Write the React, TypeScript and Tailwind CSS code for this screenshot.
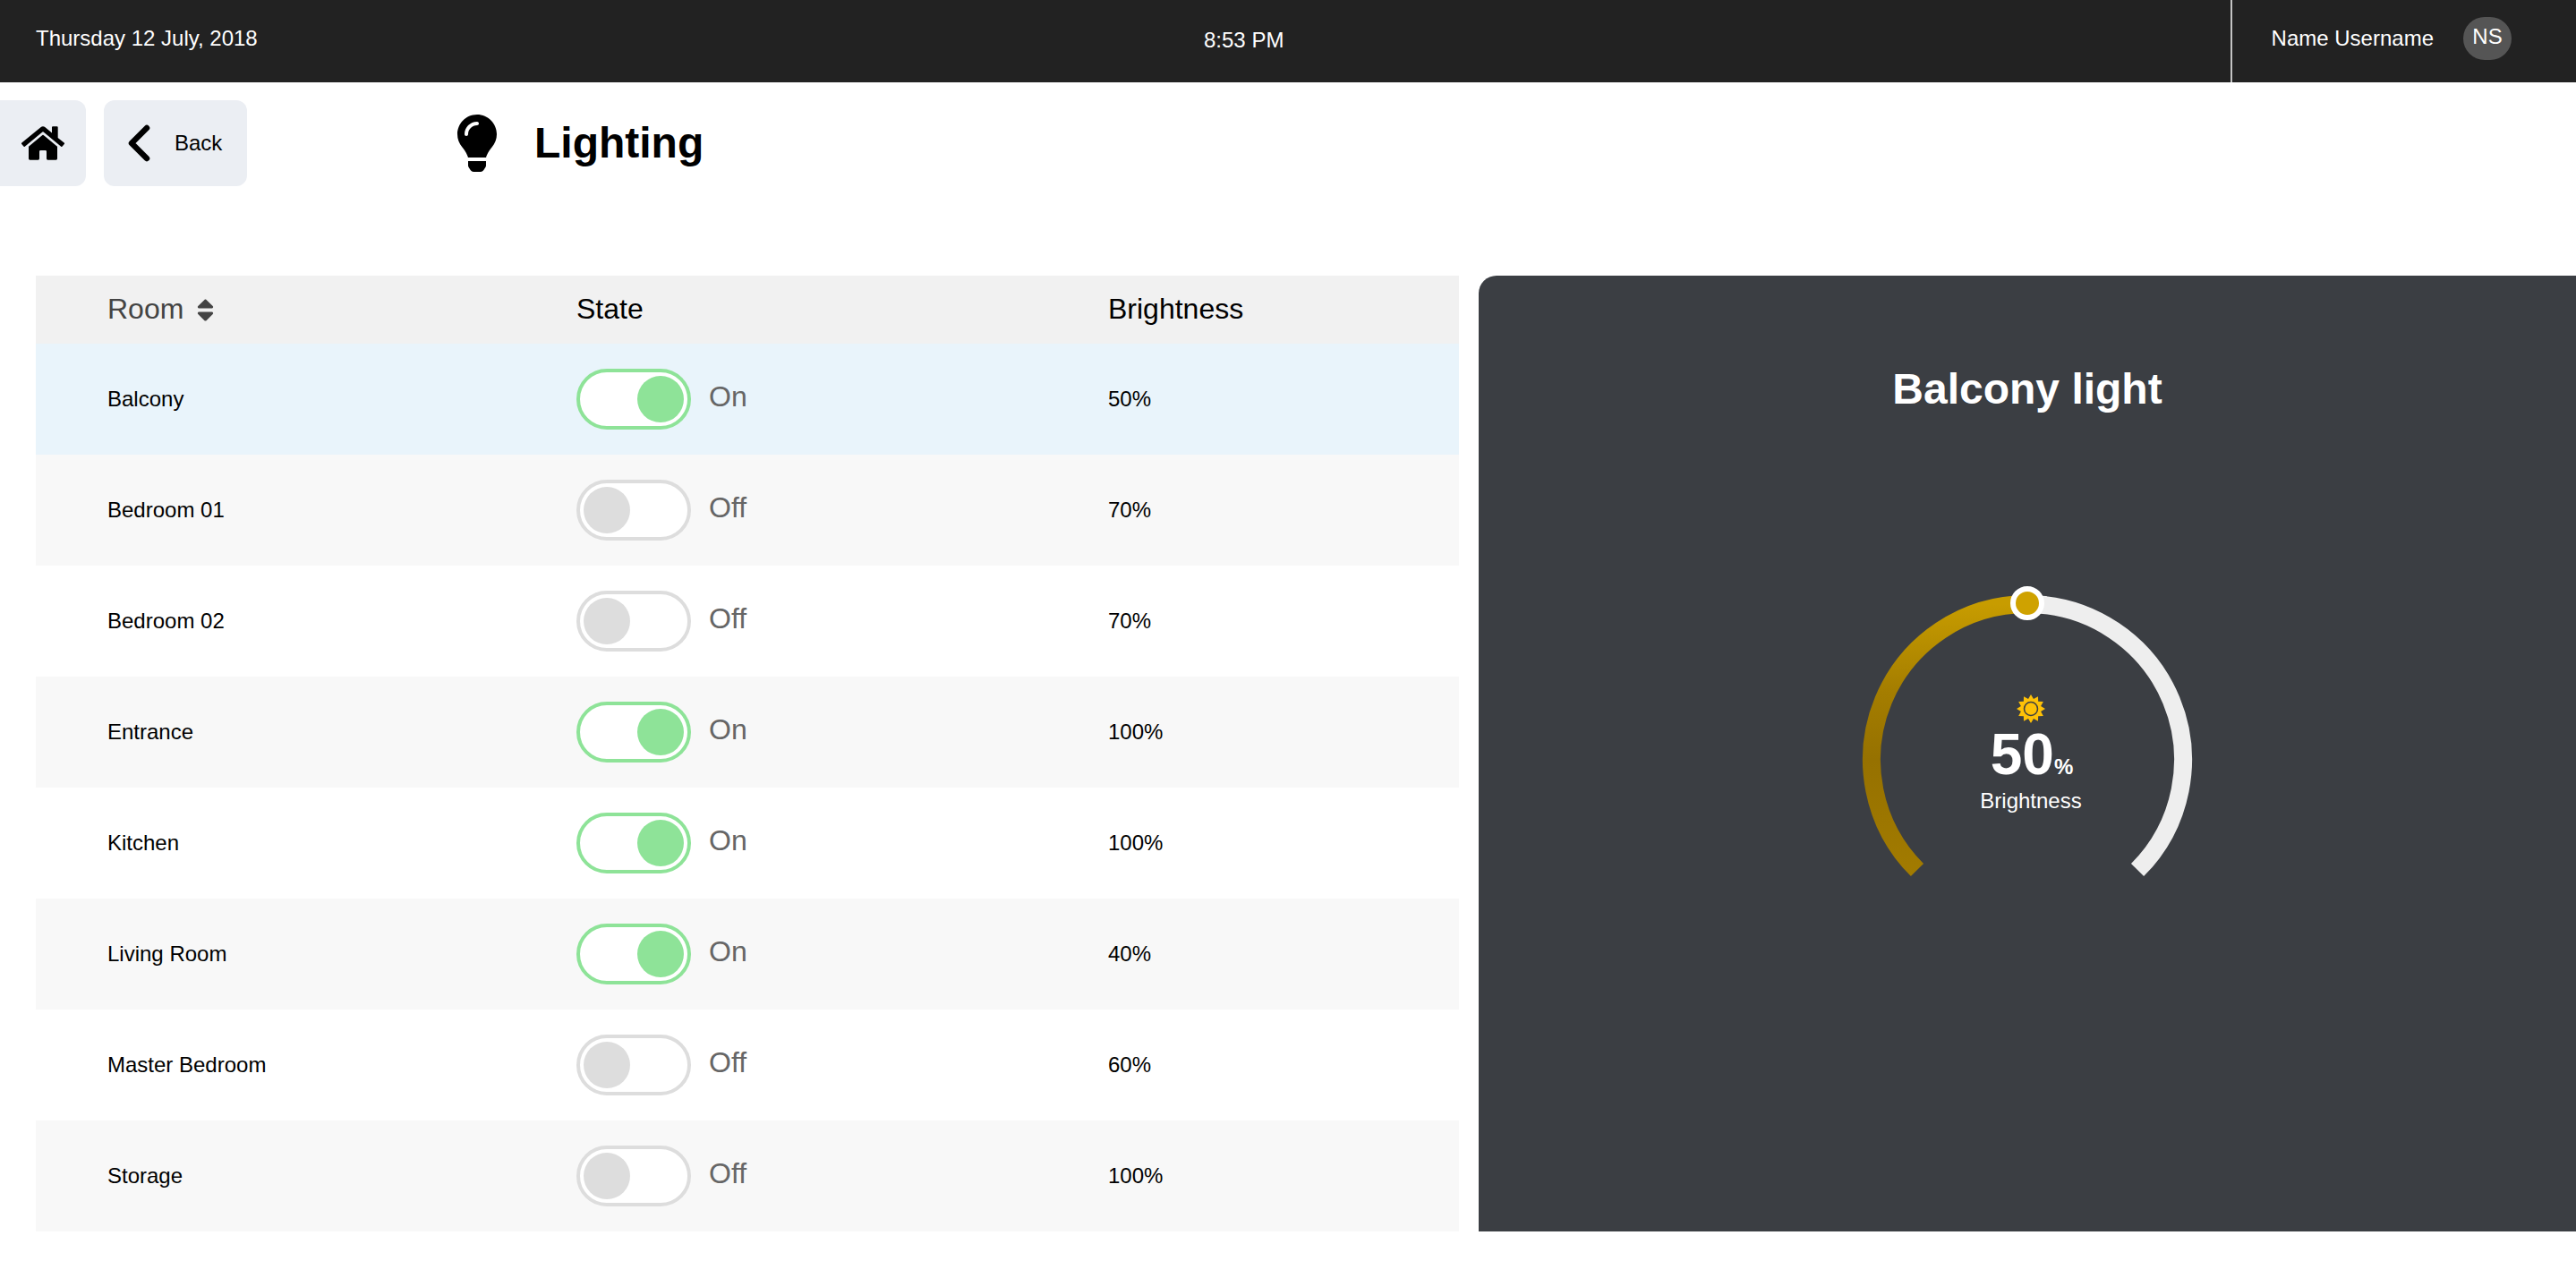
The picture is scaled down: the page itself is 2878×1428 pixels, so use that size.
import { FaHome, FaLightbulb, FaSort } from "react-icons/fa";

const rooms = [
  { name: "Balcony", on: true, brightness: "50%", bg: "bg-[#e9f4fb]" },
  { name: "Bedroom 01", on: false, brightness: "70%", bg: "bg-[#f8f8f8]" },
  { name: "Bedroom 02", on: false, brightness: "70%", bg: "bg-white" },
  { name: "Entrance", on: true, brightness: "100%", bg: "bg-[#f8f8f8]" },
  { name: "Kitchen", on: true, brightness: "100%", bg: "bg-white" },
  { name: "Living Room", on: true, brightness: "40%", bg: "bg-[#f8f8f8]" },
  { name: "Master Bedroom", on: false, brightness: "60%", bg: "bg-white" },
  { name: "Storage", on: false, brightness: "100%", bg: "bg-[#f8f8f8]" },
];

const sunPoints = Array.from({ length: 24 }, (_, i) => {
  const r = i % 2 === 0 ? 16 : 11.5;
  const a = (i * Math.PI) / 12 - Math.PI / 2;
  return `${16 + r * Math.cos(a)},${16 + r * Math.sin(a)}`;
}).join(" ");

const Toggle = ({ on }: { on: boolean }) => (
  <div
    className={`flex items-center w-[128px] h-[68px] p-1 bg-white border-4 rounded-full ${
      on ? "justify-end border-[#8ee398]" : "justify-start border-[#dddddd]"
    }`}
  >
    <div
      className={`w-[52px] h-[52px] rounded-full ${
        on ? "bg-[#8ee398]" : "bg-[#dddddd]"
      }`}
    />
  </div>
);

const Gauge = () => (
  <div className="relative w-[402px] h-[340px] mt-[196px]">
    <svg
      className="overflow-visible"
      width="402"
      height="340"
      viewBox="0 0 402 340"
      fill="none"
    >
      <defs>
        <linearGradient
          id="gauge-fill"
          gradientUnits="userSpaceOnUse"
          x1="0"
          y1="16"
          x2="0"
          y2="320"
        >
          <stop offset="0" stopColor="#c79c00" />
          <stop offset="0.31" stopColor="#a57e00" />
          <stop offset="0.57" stopColor="#967100" />
          <stop offset="1" stopColor="#a27b00" />
        </linearGradient>
      </defs>
      <path
        d="M201 16 A174 174 0 0 1 324.04 313.04"
        stroke="#eeeeee"
        strokeWidth="20"
      />
      <path
        d="M77.96 313.04 A174 174 0 0 1 201 16"
        stroke="url(#gauge-fill)"
        strokeWidth="20"
      />
      <circle cx="201" cy="15" r="16" fill="#cfa200" stroke="#ffffff" strokeWidth="6" />
    </svg>
    <div className="absolute top-[117px] left-[4px] w-full flex flex-col items-center text-white">
      <svg width="32" height="32" viewBox="0 0 32 32">
        <polygon points={sunPoints} fill="#fec107" />
        <circle cx="16" cy="16" r="7.5" fill="#fec107" stroke="#3b3e43" strokeWidth="1.5" />
      </svg>
      <div className="flex items-baseline h-[62px] mt-[4px] ml-[2px]">
        <span className="text-[64px] leading-[62px] font-bold">50</span>
        <span className="text-[24px] font-bold leading-none">%</span>
      </div>
      <span className="text-[24px] leading-[28px] mt-[7px]">Brightness</span>
    </div>
  </div>
);

export default function App() {
  return (
    <div className="w-[2878px] h-[1428px] bg-white text-black font-['Liberation_Sans',sans-serif]">
      <header className="relative flex items-center justify-between h-[92px] pl-10 bg-[#222222] text-white text-[24px]">
        <span className="-mt-[7px]">Thursday 12 July, 2018</span>
        <span className="absolute left-[1345px] top-[27px]">8:53 PM</span>
        <div className="flex items-center h-full border-l-2 border-[#c4c4c4] pl-[44px] pr-[72px]">
          <span className="-mt-[7px]">Name Username</span>
          <span className="flex items-center justify-center w-[54px] h-[48px] ml-[33px] pb-1 rounded-full bg-[#555555] -mt-[7px]">
            NS
          </span>
        </div>
      </header>

      <div className="flex items-center mt-5 h-24">
        <button className="flex items-center justify-center w-24 h-24 rounded-r-xl bg-[#ebeef3]">
          <FaHome className="text-[48px]" />
        </button>
        <button className="flex items-center w-[160px] h-24 ml-5 pl-[26px] rounded-xl bg-[#ebeef3] text-[24px]">
          <svg width="26" height="42" viewBox="0 0 26 42" fill="none">
            <path
              d="M22 4 L5 21 L22 38"
              stroke="#000000"
              strokeWidth="6.5"
              strokeLinecap="round"
              strokeLinejoin="round"
            />
          </svg>
          <span className="ml-[27px]">Back</span>
        </button>
        <FaLightbulb className="text-[64px] ml-[225px]" />
        <h1 className="ml-[32px] text-[48px] font-bold">Lighting</h1>
      </div>

      <main className="flex items-stretch mt-[100px]">
        <section className="w-[1590px] ml-10">
          <div className="grid grid-cols-[604px_594px_1fr] items-center h-[76px] pb-[2px] bg-[#f1f1f1] text-[32px]">
            <div className="flex items-center pl-[80px] text-[#444444]">
              Room
              <FaSort className="text-[31px] ml-[9px] mt-[2px]" />
            </div>
            <div>State</div>
            <div>Brightness</div>
          </div>
          {rooms.map((room) => (
            <div
              key={room.name}
              className={`grid grid-cols-[604px_594px_1fr] items-center h-[124px] text-[24px] ${room.bg}`}
            >
              <div className="pl-[80px]">{room.name}</div>
              <div className="flex items-center">
                <Toggle on={room.on} />
                <span className="ml-5 -mt-[6px] text-[32px] text-[#666666]">
                  {room.on ? "On" : "Off"}
                </span>
              </div>
              <div>{room.brightness}</div>
            </div>
          ))}
        </section>

        <section className="flex flex-col items-center flex-1 h-[1068px] ml-[22px] pt-[99px] rounded-tl-[20px] bg-[#3b3e43] text-white">
          <h2 className="text-[48px] leading-[56px] font-bold">Balcony light</h2>
          <Gauge />
        </section>
      </main>
    </div>
  );
}
